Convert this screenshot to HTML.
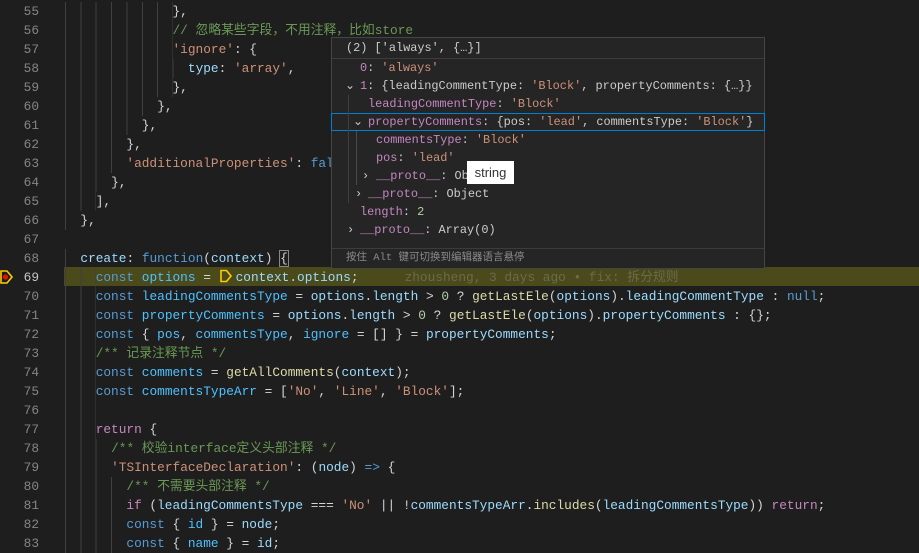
<!DOCTYPE html>
<html><head><meta charset="utf-8"><style>
body{margin:0;width:919px;height:545px;background:#1e1e1e;overflow:hidden;position:relative;font-family:"Liberation Mono","Noto Sans CJK SC",monospace;font-size:12.8px;}
.ln{position:absolute;left:0;width:39px;text-align:right;color:#858585;height:19px;line-height:19px;}
.l{position:absolute;left:65px;height:19px;line-height:19px;white-space:pre;color:#d4d4d4;}
.g{display:inline-block;height:19px;vertical-align:top;background:repeating-linear-gradient(90deg,#404040 0,#404040 1px,transparent 1px,transparent 15.36px);}
.k{color:#569cd6}.v{color:#9cdcfe}.c{color:#4fc1ff}.f{color:#dcdcaa}.s{color:#ce9178}.cm{color:#6a9955}.p{color:#c586c0}.n{color:#b5cea8}
.hl{position:absolute;left:64px;top:267px;width:855px;height:19px;background:#4a4a1b;}
.hov{position:absolute;left:331px;top:37px;width:432px;height:230px;background:#252526;border:1px solid #454545;font-size:11.9px;color:#cccccc;}
.hr{position:absolute;height:18px;line-height:18px;white-space:pre;}
.key{color:#c586c0}
.chev{position:absolute;color:#c5c5c5;font-size:11px;}
</style></head><body>
<div class="hl"></div>
<!-- line numbers -->
<div class="ln" style="top:1.5px">55</div>
<div class="ln" style="top:20.5px">56</div>
<div class="ln" style="top:39.5px">57</div>
<div class="ln" style="top:58.5px">58</div>
<div class="ln" style="top:77.5px">59</div>
<div class="ln" style="top:96.5px">60</div>
<div class="ln" style="top:115.5px">61</div>
<div class="ln" style="top:134.5px">62</div>
<div class="ln" style="top:153.5px">63</div>
<div class="ln" style="top:172.5px">64</div>
<div class="ln" style="top:191.5px">65</div>
<div class="ln" style="top:210.5px">66</div>
<div class="ln" style="top:229.5px">67</div>
<div class="ln" style="top:248.5px">68</div>
<div class="ln" style="top:267.5px;color:#c6c6c6">69</div>
<div class="ln" style="top:286.5px">70</div>
<div class="ln" style="top:305.5px">71</div>
<div class="ln" style="top:324.5px">72</div>
<div class="ln" style="top:343.5px">73</div>
<div class="ln" style="top:362.5px">74</div>
<div class="ln" style="top:381.5px">75</div>
<div class="ln" style="top:400.5px">76</div>
<div class="ln" style="top:419.5px">77</div>
<div class="ln" style="top:438.5px">78</div>
<div class="ln" style="top:457.5px">79</div>
<div class="ln" style="top:476.5px">80</div>
<div class="ln" style="top:495.5px">81</div>
<div class="ln" style="top:514.5px">82</div>
<div class="ln" style="top:533.5px">83</div>
<!-- breakpoint icon -->
<svg style="position:absolute;left:0;top:269px" width="14" height="16" viewBox="0 0 14 16"><path d="M1 2H7L12 8L7 14H1Z" fill="none" stroke="#ffcc00" stroke-width="1.6"/><circle cx="5.5" cy="8" r="2.6" fill="#e51400"/></svg>
<!-- code -->
<div class="l" style="top:1.5px"><span class="g" style="width:107.5px"></span>},</div>
<div class="l" style="top:20.5px"><span class="g" style="width:107.5px"></span><span class="cm">// 忽略某些字段，不用注释，比如store</span></div>
<div class="l" style="top:39.5px"><span class="g" style="width:107.5px"></span><span class="s">'ignore'</span>: {</div>
<div class="l" style="top:58.5px"><span class="g" style="width:122.9px"></span><span class="v">type</span>: <span class="s">'array'</span>,</div>
<div class="l" style="top:77.5px"><span class="g" style="width:107.5px"></span>},</div>
<div class="l" style="top:96.5px"><span class="g" style="width:92.2px"></span>},</div>
<div class="l" style="top:115.5px"><span class="g" style="width:76.8px"></span>},</div>
<div class="l" style="top:134.5px"><span class="g" style="width:61.4px"></span>},</div>
<div class="l" style="top:153.5px"><span class="g" style="width:61.4px"></span><span class="s">'additionalProperties'</span>: <span class="k">false</span>,</div>
<div class="l" style="top:172.5px"><span class="g" style="width:46.1px"></span>},</div>
<div class="l" style="top:191.5px"><span class="g" style="width:30.7px"></span>],</div>
<div class="l" style="top:210.5px"><span class="g" style="width:15.4px"></span>},</div>
<div class="l" style="top:248.5px"><span class="g" style="width:15.4px"></span><span class="v">create</span>: <span class="k">function</span>(<span class="v">context</span>) <span style="outline:1px solid #888">{</span></div>
<div class="l" style="top:267.5px"><span class="g" style="width:30.7px"></span><span class="k">const</span> <span class="c">options</span> = <svg width="17" height="14" style="vertical-align:-2px" viewBox="0 0 17 14"><path d="M2 1.5H7.5L12 7L7.5 12.5H2Z" fill="none" stroke="#ffcc00" stroke-width="1.6"/></svg><span class="v">context</span>.<span class="v">options</span>;      <span style="color:#6c6b4a">zhousheng, 3 days ago • fix: 拆分规则</span></div>
<div class="l" style="top:286.5px"><span class="g" style="width:30.7px"></span><span class="k">const</span> <span class="c">leadingCommentsType</span> = <span class="v">options</span>.<span class="v">length</span> &gt; <span class="n">0</span> ? <span class="f">getLastEle</span>(<span class="v">options</span>).<span class="v">leadingCommentType</span> : <span class="k">null</span>;</div>
<div class="l" style="top:305.5px"><span class="g" style="width:30.7px"></span><span class="k">const</span> <span class="c">propertyComments</span> = <span class="v">options</span>.<span class="v">length</span> &gt; <span class="n">0</span> ? <span class="f">getLastEle</span>(<span class="v">options</span>).<span class="v">propertyComments</span> : {};</div>
<div class="l" style="top:324.5px"><span class="g" style="width:30.7px"></span><span class="k">const</span> { <span class="c">pos</span>, <span class="c">commentsType</span>, <span class="c">ignore</span> = [] } = <span class="v">propertyComments</span>;</div>
<div class="l" style="top:343.5px"><span class="g" style="width:30.7px"></span><span class="cm">/** 记录注释节点 */</span></div>
<div class="l" style="top:362.5px"><span class="g" style="width:30.7px"></span><span class="k">const</span> <span class="c">comments</span> = <span class="f">getAllComments</span>(<span class="v">context</span>);</div>
<div class="l" style="top:381.5px"><span class="g" style="width:30.7px"></span><span class="k">const</span> <span class="c">commentsTypeArr</span> = [<span class="s">'No'</span>, <span class="s">'Line'</span>, <span class="s">'Block'</span>];</div>
<div class="l" style="top:400.5px"><span class="g" style="width:30.7px"></span></div>
<div class="l" style="top:419.5px"><span class="g" style="width:30.7px"></span><span class="p">return</span> {</div>
<div class="l" style="top:438.5px"><span class="g" style="width:46.1px"></span><span class="cm">/** 校验interface定义头部注释 */</span></div>
<div class="l" style="top:457.5px"><span class="g" style="width:46.1px"></span><span class="s">'TSInterfaceDeclaration'</span>: (<span class="v">node</span>) <span class="k">=&gt;</span> {</div>
<div class="l" style="top:476.5px"><span class="g" style="width:61.4px"></span><span class="cm">/** 不需要头部注释 */</span></div>
<div class="l" style="top:495.5px"><span class="g" style="width:61.4px"></span><span class="p">if</span> (<span class="v">leadingCommentsType</span> === <span class="s">'No'</span> || !<span class="v">commentsTypeArr</span>.<span class="f">includes</span>(<span class="v">leadingCommentsType</span>)) <span class="p">return</span>;</div>
<div class="l" style="top:514.5px"><span class="g" style="width:61.4px"></span><span class="k">const</span> { <span class="c">id</span> } = <span class="v">node</span>;</div>
<div class="l" style="top:533.5px"><span class="g" style="width:61.4px"></span><span class="k">const</span> { <span class="c">name</span> } = <span class="v">id</span>;</div>
<!-- hover -->
<div class="hov">
<div class="hr" style="left:14px;top:1px">(2) ['always', {…}]</div>
<div style="position:absolute;left:0;top:20px;width:432px;height:1px;background:#3c3c3c"></div>
<div class="hr" style="left:28px;top:21px"><span class="key">0</span>: <span class="s">'always'</span></div>
<div class="hr" style="left:13px;top:39px">⌄</div>
<div class="hr" style="left:28px;top:39px"><span class="key">1</span>: {leadingCommentType: <span class="s">'Block'</span>, propertyComments: {…}}</div>
<div class="hr" style="left:36px;top:57px"><span class="key">leadingCommentType</span>: <span class="s">'Block'</span></div>
<div style="position:absolute;left:-1px;top:75px;width:432px;height:16px;border:1px solid #007fd4"></div>
<div class="hr" style="left:21px;top:75px">⌄</div>
<div class="hr" style="left:36px;top:75px"><span class="key">propertyComments</span>: {pos: <span class="s">'lead'</span>, commentsType: <span class="s">'Block'</span>}</div>
<div class="hr" style="left:44px;top:93px"><span class="key">commentsType</span>: <span class="s">'Block'</span></div>
<div class="hr" style="left:44px;top:111px"><span class="key">pos</span>: <span class="s">'lead'</span></div>
<div class="hr" style="left:30px;top:129px">›</div>
<div class="hr" style="left:44px;top:129px"><span class="key">__proto__</span>: Object</div>
<div class="hr" style="left:23px;top:147px">›</div>
<div class="hr" style="left:36px;top:147px"><span class="key">__proto__</span>: Object</div>
<div class="hr" style="left:28px;top:165px"><span class="key">length</span>: <span class="n">2</span></div>
<div class="hr" style="left:15px;top:183px">›</div>
<div class="hr" style="left:28px;top:183px"><span class="key">__proto__</span>: Array(0)</div>
<div style="position:absolute;left:24px;top:93px;width:1px;height:54px;background:#4a4a4a"></div>
<div style="position:absolute;left:16px;top:57px;width:1px;height:108px;background:#3e3e3e"></div>
<div style="position:absolute;left:0;top:210px;width:432px;height:1px;background:#3c3c3c"></div>
<div class="hr" style="left:14px;top:211px;color:#8b8b8b;font-size:10.5px">按住 Alt 键可切换到编辑器语言悬停</div>
</div>
<div style="position:absolute;left:467px;top:161px;width:47px;height:23px;background:#fff;color:#333;font-family:'Liberation Sans',sans-serif;font-size:13px;line-height:23px;text-align:center">string</div>
</body></html>
